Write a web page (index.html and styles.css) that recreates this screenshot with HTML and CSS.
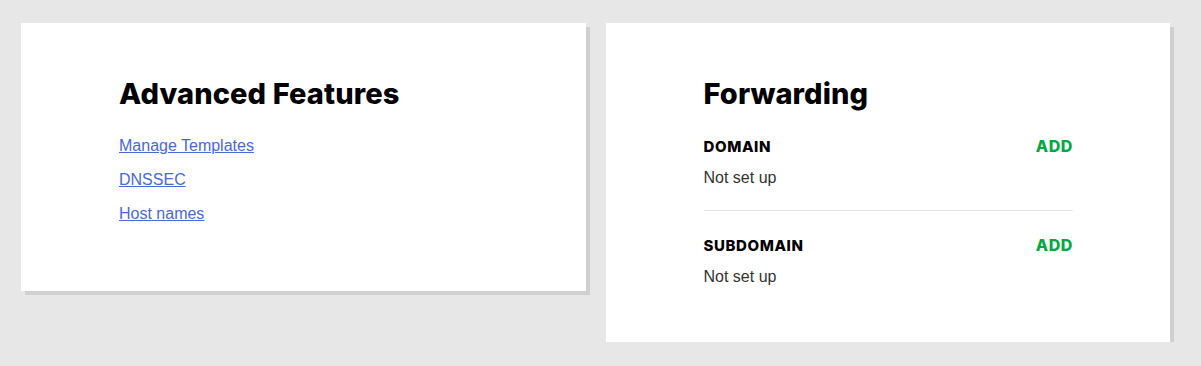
FILE: index.html
```html
<!DOCTYPE html>
<html lang="en">
<head>
  <meta charset="UTF-8" />
  <meta name="viewport" content="width=device-width, initial-scale=1.0" />
  <title>Domain Settings</title>
  <link rel="stylesheet" href="styles.css">
</head>
<body>

  <div class="cards">
    <div class="card">
      <h2>Advanced Features</h2>
      <a class="link" href="#">Manage Templates</a>
      <a class="link" href="#">DNSSEC</a>
      <a class="link" href="#">Host names</a>
    </div>

    <div class="card">
      <h2>Forwarding</h2>
      <div class="section">
        <div class="row">
          <span class="label">DOMAIN</span>
          <a class="add" href="#">ADD</a>
        </div>
        <div class="value">Not set up</div>
      </div>
      <div class="section">
        <div class="row">
          <span class="label">SUBDOMAIN</span>
          <a class="add" href="#">ADD</a>
        </div>
        <div class="value">Not set up</div>
      </div>
    </div>
  </div>

</body>
</html>
```

FILE: styles.css
```css
body {
  margin: 0;
  background: #e7e7e7;
  font-family: 'Liberation Sans', Arial, sans-serif;
  color: #111;
}

.cards {
  display: flex;
  align-items: flex-start;
  gap: 20px;
  padding: 23px 31px 0 21px;
}

.card {
  flex: 1;
  background: #fff;
  padding: 53px 97px 56px 98px;
  box-shadow: 4px 4px 0 #d0d0d0;
}

h2 {
  margin: 0 0 25px;
  font-family: Inter, sans-serif;
  font-weight: 800;
  font-size: 29px;
  line-height: 36px;
  letter-spacing: 0.1px;
  color: #000;
}

.card .section:first-of-type {
  margin-top: -1px;
}

.link {
  display: block;
  width: max-content;
  font-size: 16px;
  line-height: 18px;
  margin-bottom: 16px;
  color: #4869d4;
}

.link:last-child {
  margin-bottom: 12px;
}

.section {
  padding: 0 0 23px;
}

.section + .section {
  border-top: 1px solid #e5e5e5;
  padding: 24px 0 0;
}

.row {
  display: flex;
  justify-content: space-between;
  align-items: baseline;
  line-height: 20px;
  font-family: Inter, sans-serif;
  font-weight: 800;
  font-size: 15px;
  letter-spacing: 0.6px;
}

.label {
  color: #000;
}

.add {
  color: #00a844;
  text-decoration: none;
  font-size: 16px;
}

.value {
  margin-top: 12px;
  font-size: 16px;
  line-height: 18px;
  color: #333;
}
```
